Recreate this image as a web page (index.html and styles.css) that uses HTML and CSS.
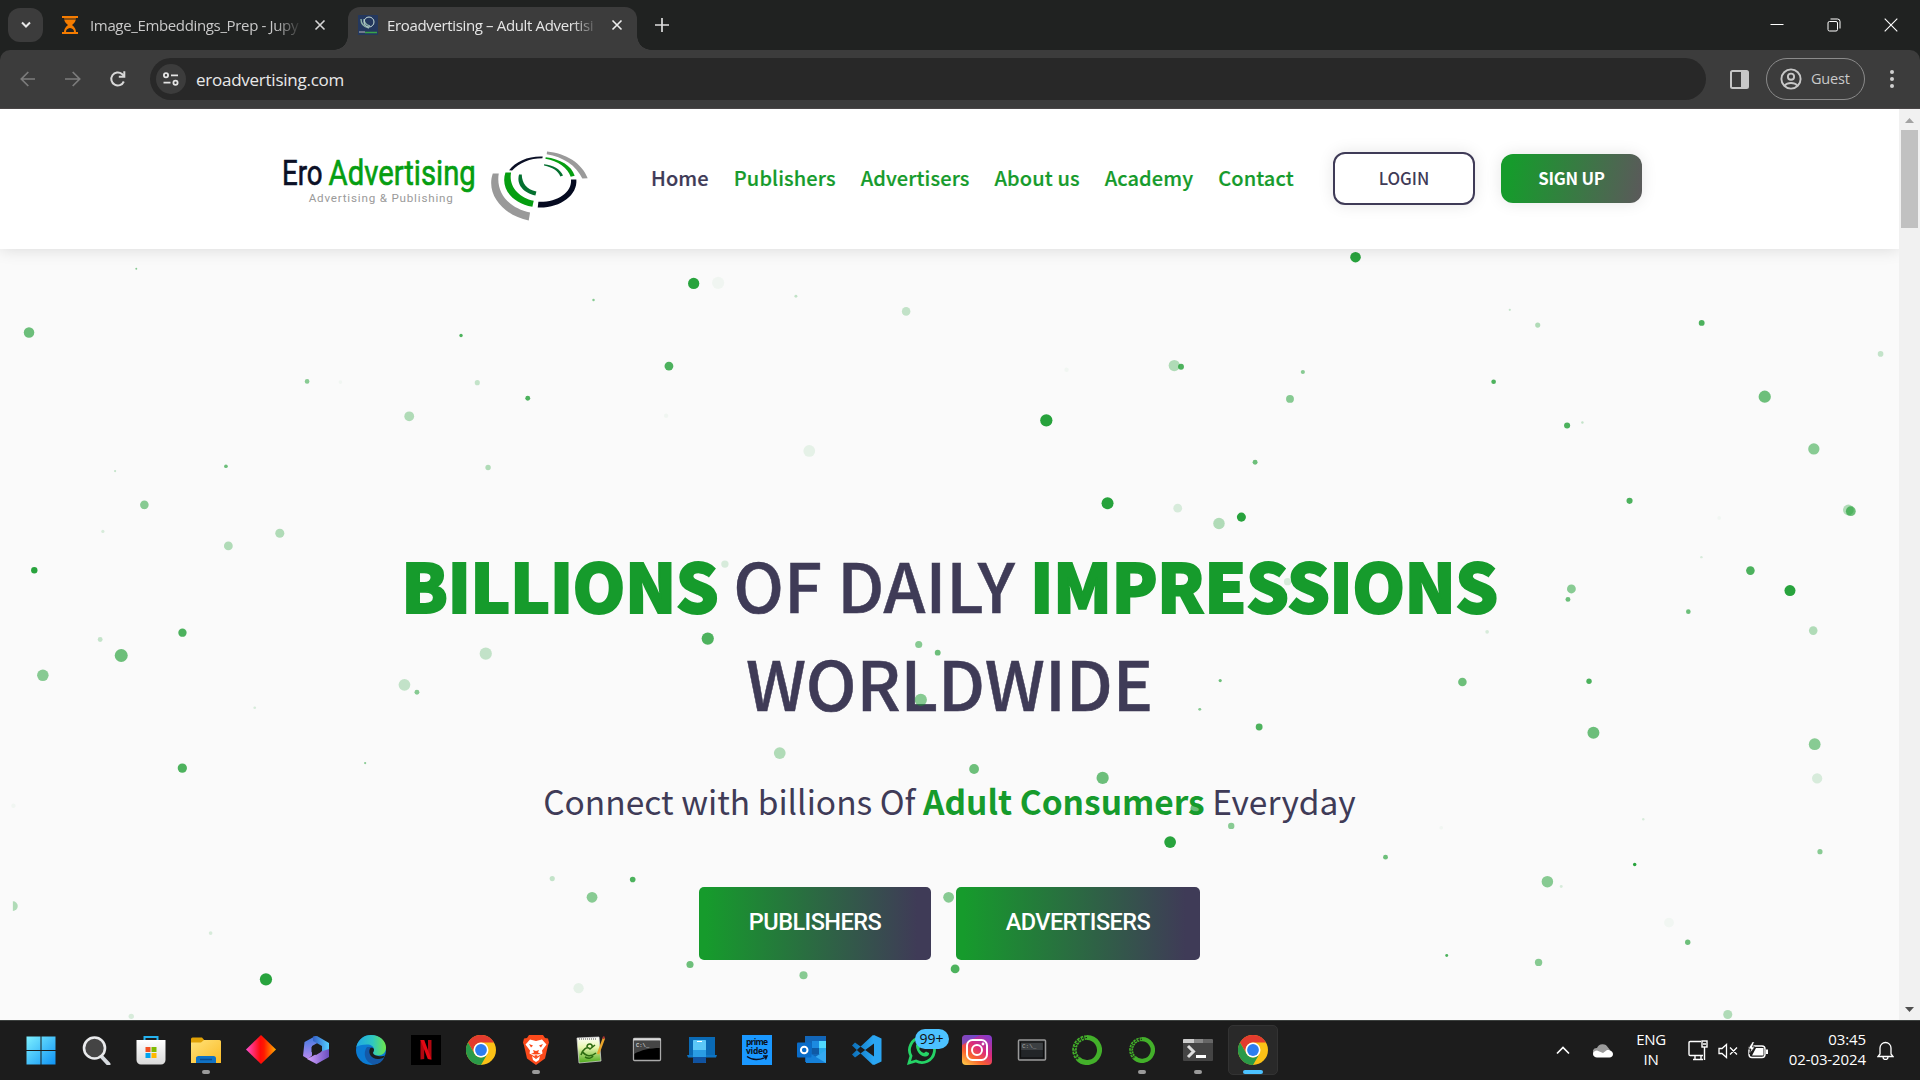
FILE: index.html
```html
<!DOCTYPE html>
<html lang="en">
<head>
<meta charset="utf-8">
<title>Eroadvertising – Adult Advertising</title>
<link rel="stylesheet" href="styles.css">
</head>
<body>
<svg class="defs" width="0" height="0">
  <defs>
    <linearGradient id="win" x1="0" y1="0" x2="1" y2="1"><stop offset="0" stop-color="#7df0ff"/><stop offset="1" stop-color="#0f93f5"/></linearGradient>
    <linearGradient id="store" x1="0" y1="0" x2="0" y2="1"><stop offset="0" stop-color="#fff"/><stop offset="1" stop-color="#d9d9d9"/></linearGradient>
    <linearGradient id="folder" x1="0" y1="0" x2="1" y2="1"><stop offset="0" stop-color="#ffe27a"/><stop offset="1" stop-color="#fbbb25"/></linearGradient>
    <linearGradient id="diamond"><stop offset="0" stop-color="#ff4fd0"/><stop offset=".48" stop-color="#ff0a0a"/><stop offset=".6" stop-color="#ff1a00"/><stop offset="1" stop-color="#ffb000"/></linearGradient>
    <linearGradient id="edgeTop"><stop offset="0" stop-color="#1fa7e6"/><stop offset=".55" stop-color="#2fc8c0"/><stop offset="1" stop-color="#6ee84a"/></linearGradient>
    <linearGradient id="insta" x1=".1" y1="1" x2=".8" y2="0"><stop offset="0" stop-color="#fec545"/><stop offset=".3" stop-color="#f9622f"/><stop offset=".6" stop-color="#dc2a7b"/><stop offset="1" stop-color="#8a3ac8"/></linearGradient>
    <linearGradient id="m1" x1="0" y1="0" x2="0" y2="1"><stop offset="0" stop-color="#3c7be0"/><stop offset="1" stop-color="#b98af0"/></linearGradient>
    <linearGradient id="m2"><stop offset="0" stop-color="#3560c8"/><stop offset="1" stop-color="#55d0ff"/></linearGradient>
    <linearGradient id="m3"><stop offset="0" stop-color="#d7a5ff"/><stop offset="1" stop-color="#6a4fc0"/></linearGradient>
    <linearGradient id="note" x1="0" y1="0" x2="0" y2="1"><stop offset="0" stop-color="#fff"/><stop offset=".4" stop-color="#e8f7b0"/><stop offset="1" stop-color="#4aa818"/></linearGradient>
    <linearGradient id="vs"><stop offset="0" stop-color="#0c6fb8"/><stop offset="1" stop-color="#2aa8f5"/></linearGradient>
    <symbol id="chrome" viewBox="0 0 30 30">
      <circle cx="15" cy="15" r="15" fill="#fbc116"/>
      <path d="M2 7.5A15 15 0 0 1 28 7.500H15a7.500 7.500 0 0 0-6.500 11.200z" fill="#e33b2e"/>
      <path d="M2 7.500 8.500 18.700A7.500 7.500 0 0 0 21.500 18.700L15 30A15 15 0 0 1 2 7.500z" fill="#2a9a48"/>
      <circle cx="15" cy="15" r="7.500" fill="#fff"/><circle cx="15" cy="15" r="5.900" fill="#2d7df0"/>
    </symbol>
    <symbol id="snake" viewBox="0 0 30 30">
      <path d="M15 2.500A12.500 12.500 0 1 1 6 23.700" fill="none" stroke="#43b02a" stroke-width="5"/>
      <path d="M15 2.500A12.500 12.500 0 0 0 6 23.700" fill="none" stroke="#43b02a" stroke-width="4.600" stroke-dasharray="2.600 .9"/>
      <path d="M15 2.500A12.500 12.500 0 0 0 6 23.700" fill="none" stroke="#1c1c1c" stroke-width="1.200" stroke-dasharray="1.500 2"/>
    </symbol>
  </defs>
</svg>

<div class="tabstrip">
  <span class="tab-search"><svg width="12" height="8" viewBox="0 0 12 8"><path d="M2 1.500 6 5.500 10 1.500" fill="none" stroke="#e8e8e8" stroke-width="2"/></svg></span>
  <div class="tab">
    <svg class="fav" width="18" height="20" viewBox="0 0 18 20"><path d="M1 1h16v2H1zM1 17h16v2H1z" fill="#f57c00"/><path d="M3 3h12c0 3-1.500 5-4 7 2.500 2 4 4 4 7H3c0-3 1.500-5 4-7C4.500 8 3 6 3 3z" fill="#f57c00"/><path d="M5 17c0-2.500 1.500-3.700 4-4 2.500.3 4 1.500 4 4z" fill="#202221"/><path d="M3 4h12" stroke="#202221"/></svg>
    <span class="tab-title">Image_Embeddings_Prep - Jupy</span>
    <svg class="x" width="12" height="12" viewBox="0 0 12 12"><path d="m1.500 1.500 9 9m0-9-9 9" stroke="#d6d6d6" stroke-width="1.600"/></svg>
  </div>
  <div class="tab active">
    <svg class="fav" width="20" height="20" viewBox="0 0 20 20"><path d="M0 0h20v20H0z" fill="#24385e"/><path d="M3 4c0 5 3 8 8 9M6 4c0 4 2 6 6 7" fill="none" stroke="#8fb3a8" stroke-width="1.400"/><circle cx="11" cy="7" r="5" fill="none" stroke="#c8ddd8"/><path d="M1 17h6" stroke="#bbb"/><path d="M7 17.500h12" stroke="#3aa548" stroke-width="1.500"/></svg>
    <span class="tab-title">Eroadvertising – Adult Advertisi</span>
    <svg class="x" width="12" height="12" viewBox="0 0 12 12"><path d="m1.500 1.500 9 9m0-9-9 9" stroke="#eee" stroke-width="1.600"/></svg>
  </div>
  <svg class="plus" width="14" height="14" viewBox="0 0 14 14"><path d="M7 0v14M0 7h14" stroke="#ddd" stroke-width="1.700"/></svg>
  <div class="win-controls">
    <svg width="14" height="14" viewBox="0 0 14 14"><path d="M.5 6.500h13" stroke="#fff"/></svg>
    <svg width="14" height="14" viewBox="0 0 14 14" fill="none" stroke="#fff"><rect x="1" y="3.500" width="9.500" height="9.500" rx="1.500"/><path d="M3.500 1h7a2.500 2.500 0 0 1 2.500 2.500v7"/></svg>
    <svg width="14" height="14" viewBox="0 0 14 14"><path d="m.7.700 12.600 12.600m0-12.600L.7 13.300" stroke="#fff" stroke-width="1.100"/></svg>
  </div>
</div>

<div class="toolbar">
  <div class="nav-icons">
    <svg width="18" height="18" viewBox="0 0 18 18" fill="none" stroke="#7c7c7c" stroke-width="1.700"><path d="M16 9H2.500M9.300 2 2.300 9l7 7"/></svg>
    <svg width="18" height="18" viewBox="0 0 18 18" fill="none" stroke="#7c7c7c" stroke-width="1.700"><path d="M1 9h14.500M8.700 2l7 7-7 7"/></svg>
    <svg width="18" height="18" viewBox="0 0 18 18" fill="none" stroke="#d8d8d8" stroke-width="2"><path d="M14.800 11.500A6.500 6.500 0 1 1 13 4L15 6"/><path d="M15.300 1.200v5.500h-5.500" /></svg>
  </div>
  <div class="omnibox">
    <span class="site-info"><svg width="18" height="14" viewBox="0 0 18 14" fill="none" stroke="#e4e4e4" stroke-width="1.800"><circle cx="4" cy="3.300" r="2.100"/><path d="M9 3.300h7M1.500 10.700h7"/><circle cx="13.500" cy="10.700" r="2.100"/></svg></span>
    <span class="url">eroadvertising.com</span>
  </div>
  <svg class="panel" width="19" height="19" viewBox="0 0 19 19"><rect x="1" y="1" width="17" height="17" rx="1.500" fill="none" stroke="#c7c7c7" stroke-width="2"/><path d="M11 1h7v17h-7z" fill="#c7c7c7"/></svg>
  <div class="guest">
    <svg width="22" height="22" viewBox="0 0 22 22" fill="none" stroke="#c7c7c7" stroke-width="1.900"><circle cx="11" cy="11" r="9.600"/><circle cx="11" cy="8.700" r="3.100"/><path d="M4.500 17.700c3-3.600 10-3.600 13 0"/></svg>
    <span>Guest</span>
  </div>
  <svg class="kebab" width="4" height="20" viewBox="0 0 4 20" fill="#d0d0d0"><circle cx="2" cy="3" r="2"/><circle cx="2" cy="10" r="2"/><circle cx="2" cy="17" r="2"/></svg>
</div>

<div class="viewport">
  <div class="page">
    <header class="site-header">
      <svg class="logo" width="313" height="77" viewBox="60 50 940 230">
        <g class="logo-name"><text x="66" y="165" textLength="122" lengthAdjust="spacingAndGlyphs" fill="#0b1026" stroke="#0b1026">Ero</text><text x="206" y="165" textLength="442" lengthAdjust="spacingAndGlyphs" fill="#069e11" stroke="#069e11">Advertising</text></g>
        <text class="logo-tag" x="146" y="216" textLength="433" lengthAdjust="spacing" fill="#9a9a9a">Advertising &amp; Publishing</text>
        <path d="M748 119C768 92 808 76 849 78l-1 5C810 83 780 96 757 120z" fill="#0b1026"/>
        <path d="M862 63c56 5 105 35 122 80l-16 1C950 105 910 79 861 71z" fill="#9a9a9a"/>
        <path d="M858 80c43 5 78 25 87 56l-12 3C924 112 895 92 857 85z" fill="#069e11"/>
        <path d="M853 101c27 3 49 14 57 34l-8 3c-6-16-24-28-49-33z" fill="#047030"/>
        <path d="M934 147h16c4 48-50 87-116 84l2-17c55 2 101-26 98-67z" fill="#050a20"/>
        <path d="M737 126h17c-8 40 22 76 68 85l-4 18c-60-11-97-54-81-103z" fill="#069e11"/>
        <path d="M778 132h8c1 26 14 45 44 51l-3 12c-35-7-58-33-49-63z" fill="#047030"/>
        <path d="M699 129h18c-10 59 33 105 94 117l-4 24c-74-14-130-77-108-141z" fill="#999"/>
      </svg>
      <nav class="menu">
        <a class="current">Home</a><a>Publishers</a><a>Advertisers</a><a>About us</a><a>Academy</a><a>Contact</a>
      </nav>
      <a class="btn login">LOGIN</a>
      <a class="btn signup">SIGN UP</a>
    </header>
    <main class="hero">
      <h1><b>BILLIONS</b> OF DAILY <b>IMPRESSIONS</b><br><span class="line2">WORLDWIDE</span></h1>
      <p class="lead">Connect with billions Of <b>Adult Consumers</b> Everyday</p>
      <div class="cta"><a class="pub">PUBLISHERS</a><a class="adv">ADVERTISERS</a></div>
      <svg class="particles" viewBox="0 203.350 1550.850 629.650" preserveAspectRatio="none" fill="#169b2c">
        <g opacity=".92"><circle cx="1107" cy="210" r="4.300"/><circle cx="566.500" cy="231.500" r="4.600"/><circle cx="854.500" cy="343.300" r="5"/><circle cx="904.500" cy="411" r="4.900"/><circle cx="1013.800" cy="422.300" r="3.700"/><circle cx="1461.800" cy="482.300" r="4.500"/><circle cx="955.600" cy="687.700" r="4.800"/><circle cx="217.200" cy="799.800" r="5"/><circle cx="28" cy="465.700" r="2.600"/><circle cx="1335" cy="706" r="1.400"/></g>
        <g opacity=".76"><circle cx="546.300" cy="299" r="3.600"/><circle cx="578" cy="521.500" r="5"/><circle cx="964.500" cy="299.500" r="2.400"/><circle cx="431" cy="325.200" r="2"/><circle cx="376.500" cy="274" r="1.400"/><circle cx="1389.700" cy="263.700" r="2.400"/><circle cx="1219.800" cy="311.800" r="1.900"/><circle cx="1279.800" cy="347.500" r="2.500"/><circle cx="1330.800" cy="409" r="2.500"/><circle cx="1429.500" cy="466" r="3.500"/><circle cx="1028.300" cy="593.700" r="2.800"/><circle cx="1297.700" cy="556.400" r="2.200"/><circle cx="148.900" cy="627.300" r="3.800"/><circle cx="149" cy="516.700" r="3.400"/><circle cx="780" cy="791.300" r="3.600"/><circle cx="516.700" cy="718.300" r="2.300"/><circle cx="1181.500" cy="780.300" r="1.200"/></g>
        <g opacity=".62"><circle cx="23.700" cy="271.500" r="4.300"/><circle cx="99" cy="535.300" r="5.300"/><circle cx="1441.200" cy="324" r="5"/><circle cx="1301.300" cy="598.500" r="4.900"/><circle cx="795.500" cy="628" r="4"/><circle cx="900.500" cy="635.300" r="5"/><circle cx="977" cy="660.500" r="4.800"/><circle cx="765.800" cy="533" r="2.400"/><circle cx="1194.300" cy="557" r="3.500"/><circle cx="184.500" cy="380.800" r="1.500"/><circle cx="1025" cy="377.500" r="2"/><circle cx="1378.800" cy="499.500" r="1.900"/><circle cx="563.500" cy="787.700" r="2.900"/><circle cx="996.500" cy="555.800" r="1.300"/><circle cx="1131.500" cy="700" r="2"/><circle cx="1378.300" cy="769.500" r="2.200"/><circle cx="1280.500" cy="489.500" r="2"/><circle cx="1511.500" cy="417.500" r="4"/></g>
        <g opacity=".5"><circle cx="752" cy="571.500" r="5"/><circle cx="656.200" cy="796.500" r="3.300"/><circle cx="483.500" cy="732.800" r="4.400"/><circle cx="774.700" cy="732.800" r="4.400"/><circle cx="750.300" cy="526.300" r="2.900"/><circle cx="35" cy="551.500" r="4.700"/><circle cx="117.900" cy="412.300" r="3.500"/><circle cx="1481.300" cy="366.600" r="4.600"/><circle cx="1482" cy="607.800" r="4.800"/><circle cx="1263.700" cy="720" r="4.700"/><circle cx="1256.500" cy="786" r="3"/><circle cx="1283.300" cy="481" r="3.600"/><circle cx="1005.500" cy="674.500" r="2.600"/><circle cx="1486.300" cy="695.500" r="2.100"/><circle cx="250.800" cy="311.500" r="1.900"/><circle cx="1064" cy="303.800" r="1.700"/><circle cx="340.500" cy="565.300" r="2"/><circle cx="1053.500" cy="325.800" r="3.200"/><circle cx="979.800" cy="579.300" r="1.200"/><circle cx="484.700" cy="245" r="1"/><circle cx="111.300" cy="219.500" r=".8"/><circle cx="298.200" cy="623.200" r=".9"/></g>
        <g opacity=".32"><circle cx="334.200" cy="340" r="4"/><circle cx="228.500" cy="435.500" r="3.700"/><circle cx="186.500" cy="445.800" r="3.600"/><circle cx="995.500" cy="427.500" r="4.700"/><circle cx="959" cy="298.500" r="4.600"/><circle cx="636.800" cy="615" r="4.800"/><circle cx="1509.500" cy="416.500" r="4.400"/><circle cx="1480.800" cy="515" r="3.500"/><circle cx="1411" cy="828.500" r="3.700"/><circle cx="1255.800" cy="265.500" r="2.100"/><circle cx="398.600" cy="381.800" r="2.200"/><path d="M10.500 736a4 4 0 0 1 0 8z"/></g>
        <g opacity=".24"><circle cx="740" cy="254.300" r="3.500"/><circle cx="396.700" cy="533.800" r="5"/><circle cx="330.300" cy="559.300" r="4.800"/><circle cx="389.800" cy="312.500" r="2.100"/><circle cx="451" cy="717.500" r="2.100"/><circle cx="81.800" cy="522.300" r="2"/><circle cx="1535.800" cy="289" r="2.300"/><circle cx="1292.300" cy="345" r="1"/><circle cx="1233" cy="253" r=".9"/><circle cx="94" cy="384.700" r=".9"/><circle cx="650" cy="242" r="1.200"/></g>
        <g opacity=".15"><circle cx="107.200" cy="830" r="2.200"/><circle cx="592" cy="460.700" r="3"/><circle cx="1484" cy="635.700" r="4.200"/><circle cx="961.800" cy="415" r="3.600"/><circle cx="1051.500" cy="475" r="3"/><circle cx="1214.500" cy="516" r="1.500"/><circle cx="172" cy="762" r="1.500"/><circle cx="84" cy="434" r="1.300"/><circle cx="208" cy="578" r="1.100"/><circle cx="1275" cy="724" r="1.200"/><circle cx="1389.500" cy="455" r="1"/><circle cx="1342" cy="669" r="1"/></g>
        <g opacity=".09"><circle cx="472.500" cy="807" r="4.200"/><circle cx="660.900" cy="368.300" r="4.800"/></g>
        <g opacity=".04"><circle cx="586.500" cy="231" r="5"/><circle cx="1363" cy="753.500" r="4"/><circle cx="1404" cy="423" r="1.500"/><circle cx="278" cy="312" r="1.500"/><circle cx="544" cy="339.500" r="1.800"/><circle cx="871" cy="302" r="1.800"/><circle cx="11" cy="658" r="1.800"/><circle cx="1177" cy="676" r="1.500"/></g>
      </svg>
    </main>
  </div>
  <div class="scrollbar">
    <svg width="21" height="21" viewBox="0 0 21 21"><path d="m6 14 4.500-5 4.500 5z" fill="#a3a3a3"/></svg>
    <div class="thumb"></div>
    <svg width="21" height="21" viewBox="0 0 21 21"><path d="m6 8 4.500 5L15 8z" fill="#505050"/></svg>
  </div>
</div>

<div class="taskbar">
  <div class="apps">
    <span class="app"><svg viewBox="0 0 30 30"><path d="M.5 1.500h14v13.500H.5zM15.500 1.500h14v13.500h-14zM.5 16h14v13.500H.5zM15.500 16h14v13.500h-14z" fill="url(#win)"/></svg></span>
    <span class="app"><svg viewBox="0 0 30 30"><path d="m20 21 7.500 8" stroke="#d5d9de" stroke-width="4" stroke-linecap="round"/><circle cx="13.500" cy="13" r="10.500" fill="#444" stroke="#e9eaec" stroke-width="2.600"/></svg></span>
    <span class="app"><svg viewBox="0 0 30 30"><path d="M8.500 6V2h13v4" fill="none" stroke="#25b3f0" stroke-width="2"/><path d="M.5 5h29v20a4.500 4.500 0 0 1-4.500 4.500H5A4.500 4.500 0 0 1 .5 25z" fill="url(#store)"/><path d="M9.500 12h5v5h-5z" fill="#f25022"/><path d="M15.500 12h5v5h-5z" fill="#7fba00"/><path d="M9.500 18h5v5h-5z" fill="#00a4ef"/><path d="M15.500 18h5v5h-5z" fill="#ffb900"/></svg></span>
    <span class="app run"><svg viewBox="0 0 30 30"><path d="M0 4a1.500 1.500 0 0 1 1.500-1.500H11L14 6v4H0z" fill="#e0a106"/><path d="M0 7.500h10L13 5h15.500A1.500 1.500 0 0 1 30 6.500V28H0z" fill="url(#folder)"/><path d="M5 28v-5.500A2.500 2.500 0 0 1 7.500 21h15a2.500 2.500 0 0 1 2.500 2.500V28z" fill="#1072c4"/><path d="M9 24.500h12" stroke="#0a4c90" stroke-width="1.500"/></svg></span>
    <span class="app"><svg viewBox="0 0 30 30"><path d="M15 0 30 14.500 15 29 0 14.500z" fill="url(#diamond)"/></svg></span>
    <span class="app"><svg viewBox="0 0 30 30"><path d="M14.500 1 3.500 7 2 21l5 3 4-3.500V11l8-4.500z" fill="url(#m1)"/><path d="m12 1.500 4-.5 12 7v13l-7-3v-7l-9-5z" fill="url(#m2)"/><path d="M28 14v8L15.500 29 6 24l1-.5L20 16.500z" fill="url(#m3)"/><path d="m15 9.500 5 2.500v5l-5 3-4.500-3v-5z" fill="#1c1c1c"/></svg></span>
    <span class="app"><svg viewBox="0 0 30 30"><circle cx="15" cy="15" r="15" fill="#0b7bd3"/><path d="M.3 12C2 4.500 8 0 15 0c9 0 15 6 15 12.500 0 5-3.500 8-8 8-3 0-5-1-5-2.500 0-1 1-1.500 1-3.500 0-3-3-5-7-5-5 0-9 1-10.700 2.500z" fill="url(#edgeTop)"/><path d="M11 12c-5 7-1 17 8 17.500 4-.5 7-3 9-6.500-5 2.500-11 0-12-6-1 0-3-2-1-5z" fill="#1459a8"/><path d="M14 13.500c-2.500 5 2 10.500 7.500 10.500 2 0 4-.3 6-1.300l1.500-2.200c-3 1.500-11 1-12-2.500 0-1 1-1.500 1-3.500-.5-2-2.500-3-4-1z" fill="#1c1c1c"/></svg></span>
    <span class="app"><svg viewBox="0 0 30 30"><path d="M0 0h30v30H0z"/><path d="M9.500 5h3.700v19l-3.700.5zM17 5h3.500v19.500L17 24z" fill="#b00710"/><path d="M9.500 5h3.700l7.300 19.500-3.700-.500z" fill="#e50914"/></svg></span>
    <span class="app"><svg><use href="#chrome"/></svg></span>
    <span class="app run"><svg viewBox="0 0 30 30"><path d="m8 0h14l2 3 3 .500 1 4-1 3-3 13-9 6.500L6 23.500 3 10.500l-1-3 1-4L6 3z" fill="#fb4a1b"/><path d="m15 6 6-1.500 4.500 5-4.500 6 .500 3L17 21l-2 1.500L13 21l-4.500-2.500.5-3-4.500-6L9 4.500z" fill="#fff"/><path d="m8 9 4 1.500-2 2zM22 9l-4 1.500 2 2zM12 15l3 1 3-1-1 2.500 3 1.500-5 .5-5-.5 3-1.500zM13 21l2-1 2 1-2 2z" fill="#fb4a1b"/><path d="m11 21 4 3 4-3-1 4-3 2-3-2z" fill="#fff"/></svg></span>
    <span class="app"><svg viewBox="0 0 30 30"><path d="m1 3 22-1 2 24-22 2z" fill="url(#note)" stroke="#ddd" stroke-width=".7"/><path d="M3 4h18" stroke="#888" stroke-width="1.500" stroke-dasharray="1 1"/><path d="M5 20c2-6 6-9 9-6l5-4M6 16c4 6 9 6 14 2M11 12c0-4 6-4 5 0M9 22c4 2 7 1 8-1" fill="none" stroke="#2d6b12" stroke-width="1.600"/><path d="m28 3-6 16" stroke="#e9a52b" stroke-width="2.400"/><path d="m28 1.500-.7 2.500" stroke="#a33" stroke-width="2"/></svg></span>
    <span class="app"><svg viewBox="0 0 30 30"><rect x="1.500" y="3.500" width="27" height="22" rx="1" fill="#000" stroke="#aaa" stroke-width="1.300"/><path d="M1.500 4.500h27" stroke="#ddd" stroke-width="2.200"/><path d="M2 6h26v7C18 13 9 15 2 19z" fill="#454545"/><text x="4" y="12" font-size="5.500" class="mono" fill="#eee">C:\_</text></svg></span>
    <span class="app"><svg viewBox="0 0 30 30"><path d="M2 2h26v18H2z" fill="#0a6ab5"/><path d="M0 20h30l-1 2.500H1z" fill="#0d74c4"/><rect x="6" y="5" width="13" height="23" rx="1" fill="#2a9de4"/><path d="M6 6a1 1 0 0 1 1-1h11a1 1 0 0 1 1 1v9H6z" fill="#5cc8f8"/><path d="M6 22h13v5a1 1 0 0 1-1 1H7a1 1 0 0 1-1-1z" fill="#1052a0"/><path d="M10 6.500h5" stroke="#fff"/></svg></span>
    <span class="app"><svg viewBox="0 0 30 30"><path d="M0 0h30v30H0z" fill="#1a98ff"/><text class="prime" x="15" y="10" textLength="22" fill="#0b1020">prime</text><text class="prime" x="15" y="19" textLength="22" fill="#0b1020">video</text><path d="M5 21.500c5 4 13 4 19 .5M21 21l4 0-1.500 3.500" fill="none" stroke="#0b1020" stroke-width="1.400"/></svg></span>
    <span class="app"><svg viewBox="0 0 30 30"><path d="M8 1h21v26H8z" fill="#1266b8"/><path d="M15 6h7v7h-7z" fill="#1c8ae0"/><path d="M22 6h7v7h-7z" fill="#50d9ff"/><path d="M15 13h7v6h-7z" fill="#0f5aa5"/><path d="M22 13h7v6h-7z" fill="#28a8ea"/><path d="m9 28 20-13v13z" fill="#35a9f0"/><path d="m9 16 20 12H9z" fill="#1580d8"/><rect y="7.500" width="14.500" height="15" rx="1" fill="#0a6cc8"/><circle cx="7.200" cy="15" r="3.300" fill="none" stroke="#fff" stroke-width="2"/></svg></span>
    <span class="app"><svg viewBox="0 0 30 30"><path d="m22 0 7.500 3.500v23L22 30z" fill="#2aa5f2"/><path d="M22 8.500 3 22.500 0 19.500 21 0l1 .5zM22 21.500 3 7.500l-3 3L21 30l1-.5z" fill="url(#vs)"/></svg></span>
    <span class="app"><svg viewBox="0 0 30 30"><path d="m2 28 2-7A12.500 12.500 0 1 1 9 26z" fill="none" stroke="#25d366" stroke-width="2.800"/><path d="M9 10c1-2 3-2 3.500-.5l1 2.500-1.300 2c1.300 2.300 3 3.500 4.800 4l2-1.500 3 1.500c.5 2-2 4-4.500 3.500C12 20.500 9 15 9 10z" fill="#25d366"/></svg><em class="badge">99+</em></span>
    <span class="app"><svg viewBox="0 0 30 30"><rect width="30" height="30" rx="4" fill="url(#insta)"/><path d="M0 4a4 4 0 0 1 4-4h14L0 10z" fill="#5b52d8" opacity=".7"/><g fill="none" stroke="#fff" stroke-width="2"><rect x="5" y="5" width="20" height="20" rx="5.500"/><circle cx="15" cy="15" r="5"/></g><circle cx="21" cy="9" r="1.400" fill="#fff"/></svg></span>
    <span class="app"><svg viewBox="0 0 30 30"><rect x="1.500" y="5" width="27" height="20" rx="1" fill="#222528" stroke="#999" stroke-width="1.500"/><path d="M3 6h24v9H3z" fill="#3c4043"/><rect x="3.500" y="7" width="23" height="16" fill="none" stroke="#0e0e0e" stroke-width="1.200"/><text x="5" y="13" font-size="6" class="mono" fill="#aaa">C:\_</text></svg></span>
    <span class="app"><svg><use href="#snake"/></svg></span>
    <span class="app run"><svg class="small"><use href="#snake"/></svg></span>
    <span class="app run"><svg viewBox="0 0 30 30"><rect y="4" width="30" height="22" rx="1" fill="#444"/><path d="M0 5a1 1 0 0 1 1-1h10v4H0z" fill="#ccc"/><path d="M11 4h9v4h-9z" fill="#888"/><path d="M20 4h9l1 1v3H20z" fill="#666"/><path d="m5 11 5.500 5.500L5 22" fill="none" stroke="#ddd" stroke-width="3"/><path d="M13 21.500h10" stroke="#fff" stroke-width="3"/></svg></span>
    <span class="app on"><svg><use href="#chrome"/></svg></span>
  </div>
  <div class="tray">
    <svg class="chev" width="14" height="9" viewBox="0 0 14 9"><path d="m1 7.500 6-6 6 6" fill="none" stroke="#fff" stroke-width="1.700"/></svg>
    <svg class="cloud" width="20" height="14" viewBox="0 0 20 14"><path d="M1 11a4 4 0 0 1 3-7 6 6 0 0 1 11-.5L17 6 4 13z" fill="#9b9b9b"/><path d="M0 10c0-2 2-3.500 4-3.500L10 9l4-3c3-.5 6 1.500 6 4 0 2-1.500 3.500-3.500 3.500H4C2 13.500 0 12 0 10z" fill="#fff"/></svg>
    <span class="lang">ENG<br>IN</span>
    <svg class="net" width="20" height="21" viewBox="0 0 20 21" fill="none" stroke="#fff" stroke-width="1.400"><path d="M13 1.500H2.200A1.200 1.200 0 0 0 1 2.700v11.600a1.200 1.200 0 0 0 1.200 1.200H15M5 19.500h10M7 16v3M13 16v3"/><rect x="14" y="1" width="5" height="6"/><path d="M15 4h3M16.500 7v13"/></svg>
    <svg class="vol" width="20" height="16" viewBox="0 0 20 16" fill="none" stroke="#fff" stroke-width="1.300"><path d="M1 5.500h3l4.500-4v13l-4.500-4H1zM12 4.500l7 7m0-7-7 7"/></svg>
    <svg class="bat" width="20" height="17" viewBox="0 0 20 17"><rect x="1" y="4" width="16" height="11.500" rx="3" fill="none" stroke="#fff" stroke-width="1.400"/><path d="M4 13.500 8 6h7.500v7.500zM18 7.500h2V12h-2z" fill="#fff"/><path d="M4.500-.5 0 7h3L1.500 12 7 5H4.500L6.500-.5z" fill="#fff" stroke="#1c1c1c" stroke-width=".8"/></svg>
    <span class="clock">03:45<br>02-03-2024</span>
    <svg class="bell" width="17" height="19" viewBox="0 0 17 19" fill="none" stroke="#fff" stroke-width="1.300"><path d="M3 13V7a5.500 5.500 0 0 1 11 0v6l2 2.500H1zM6 16a2.500 2.500 0 0 0 5 0"/></svg>
  </div>
</div>
</body>
</html>
```
FILE: styles.css
```css
* { box-sizing: border-box; }
body { margin: 0; width: 1920px; height: 1080px; overflow: hidden; display: flex; flex-direction: column; font-family: "Open Sans", "Noto Sans", sans-serif; background: #202221; }
svg { display: block; flex: none; }
.defs { position: absolute; }

.tabstrip { height: 50px; display: flex; align-items: flex-start; padding-left: 8px; background: #202221; }
.tab-search { flex: none; width: 35px; height: 34px; margin-top: 8px; border-radius: 12px; background: #3c3c3c; display: flex; align-items: center; justify-content: center; }
.tab { flex: none; width: 289px; height: 43px; margin-top: 7px; display: flex; align-items: center; padding: 0 14px 8px 10px; }
.tab:not(.active) { margin-left: 8px; width: 297px; padding-right: 22px; }
.tab-title { width: 210px; margin-left: 9px; overflow: hidden; white-space: nowrap; font-size: 15px; letter-spacing: -0.350px; line-height: 24px; color: #c9c9c9; -webkit-mask-image: linear-gradient(90deg, #000 88%, transparent 101%); mask-image: linear-gradient(90deg, #000 88%, transparent 101%); }
.tab:not(.active) .tab-title { margin-left: 11px; }
.tab .x { margin-left: auto; }
.active { position: relative; background: #3c3c3c; border-radius: 12px 12px 0 0; }
.active .tab-title { color: #e6e6e6; }
.active::before, .active::after { content: ""; position: absolute; bottom: 0; width: 14px; height: 14px; }
.active::before { left: -14px; background: radial-gradient(circle at 0 0, transparent 13.5px, #3c3c3c 14px); }
.active::after { right: -14px; background: radial-gradient(circle at 100% 0, transparent 13.5px, #3c3c3c 14px); }
.plus { margin: 18px 0 0 18px; }
.win-controls { margin: 18px 22px 0 auto; display: flex; gap: 43px; }

.toolbar { height: 59px; display: flex; align-items: center; padding-left: 19px; background: #3c3c3c; border-radius: 10px 10px 0 0; border-bottom: 1px solid #4a4647; }
.nav-icons { display: flex; gap: 27px; width: 131px; }
.omnibox { width: 1556px; height: 42px; border-radius: 21px; background: #282828; display: flex; align-items: center; padding-left: 6px; }
.site-info { width: 30px; height: 30px; border-radius: 50%; background: #3c3c3c; display: flex; align-items: center; justify-content: center; }
.url { margin-left: 10px; font-size: 17px; letter-spacing: -0.250px; color: #e8e8e8; }
.panel { margin-left: 24px; }
.guest { width: 99px; height: 42px; margin-left: 17px; border: 1px solid #8b8b8b; border-radius: 21px; display: flex; align-items: center; gap: 9px; padding-left: 13px; color: #c9c9c9; font-size: 14.500px; letter-spacing: -0.2px; }
.guest span { margin-top: -2px; }
.kebab { margin-left: 25px; }

.viewport { height: 911px; display: flex; }
.page { width: 1899px; display: flex; flex-direction: column; background: #fafafa; }
.site-header { height: 140px; flex: none; display: flex; align-items: center; padding: 0 0 2px 280px; background: #fff; box-shadow: 0 0 16px rgba(0,0,0,.14); z-index: 1; clip-path: inset(0 0 -20px 0); }
.logo { margin-top: 14px; }
.logo-name { font-family: "Roboto", sans-serif; font-size: 106px; stroke-width: 2px; }
.logo-tag { font-family: "Roboto", sans-serif; font-size: 35px; }
.menu, .btn, h1, .lead { font-family: "Noto Sans CJK JP", sans-serif; }
.menu { display: flex; gap: 25px; margin-left: 58px; width: 682px; font-size: 20px; letter-spacing: .12px; font-weight: 500; line-height: 30px; color: #169b2c; white-space: nowrap; -webkit-text-stroke: .2px; }
.current { color: #3f3b57; }
.btn { display: flex; align-items: center; justify-content: center; border-radius: 12px; font-size: 16.800px; font-weight: 500; line-height: 24px; box-shadow: 0 0 16px rgba(0,0,0,.1); }
.login { width: 142px; height: 53px; border: 2px solid #3f3b57; color: #3f3b57; background: #fff; }
.signup { width: 141px; height: 49px; margin-left: 26px; color: #fff; font-weight: 700; letter-spacing: -.25px; background: linear-gradient(100deg, #169b2c 8%, #5a5a5a 98%); }

.hero { position: relative; flex: 1; display: flex; flex-direction: column; align-items: center; color: #3f3b57; }
.hero b { color: #169b2c; }
h1 { margin: 286px 0 0; font-size: 67.300px; line-height: 98px; font-weight: 500; text-align: center; white-space: nowrap; -webkit-text-stroke: .5px; }
h1 b { font-weight: 900; letter-spacing: -.6px; -webkit-text-stroke: 1.800px; }
.lead { margin: 45px 0 0; font-size: 33.500px; line-height: 50px; font-weight: 400; white-space: nowrap; }
.lead b { font-weight: 700; }
.cta { display: flex; gap: 25px; margin-top: 61px; }
.cta a { height: 73px; border-radius: 5px; display: flex; align-items: center; justify-content: center; padding-bottom: 4px; color: #fff; font: 500 23.500px "Roboto", sans-serif; letter-spacing: -.55px; background: linear-gradient(90deg, #169b2c 3%, #3f3b57 94%); }
.pub { width: 232px; }
.adv { width: 244px; }
.particles { position: absolute; inset: 0; width: 1899px; height: 771px; }

.scrollbar { width: 21px; background: #f1f1f1; display: flex; flex-direction: column; align-items: center; }
.thumb { width: 17px; height: 98px; margin-bottom: auto; background: #c1c1c1; }

.taskbar { height: 60px; display: flex; background: #1c1c1c; border-top: 1px solid #3c403e; padding-left: 13px; color: #fff; }
.apps { display: flex; padding-top: 4px; }
.app { position: relative; width: 55.100px; height: 50px; display: flex; align-items: center; justify-content: center; }
.app svg { width: 30px; height: 30px; }
.app svg.small { width: 26px; height: 26px; }
.run::after { content: ""; position: absolute; bottom: 1px; width: 8px; height: 4px; border-radius: 2px; background: #9a9a9a; }
.on { width: 50px; margin-left: 2.500px; background: #292929; border: 1px solid #333; border-radius: 5px; }
.on::after { content: ""; position: absolute; bottom: 0; width: 20px; height: 4px; border-radius: 2px; background: #4cc2ff; }
.badge { position: absolute; left: 20px; top: 4px; width: 34px; height: 20px; border-radius: 10px; background: #4cc2ff; color: #111; font: 14px/20px "Open Sans", sans-serif; text-align: center; }
.mono { font-family: "Liberation Mono", monospace; }
.prime { font: 700 8.500px "Open Sans", sans-serif; text-anchor: middle; }
.tray { margin-left: auto; display: flex; align-items: center; padding-right: 26px; font-size: 15px; line-height: 20px; }
.cloud { margin-left: 23px; }
.lang { width: 40px; margin: -3px 0 0 18px; text-align: center; letter-spacing: -.3px; }
.net { margin-left: 17px; }
.vol { margin-left: 10px; }
.bat { margin-left: 10px; }
.clock { width: 88px; margin: -3px 0 0 10px; text-align: right; white-space: nowrap; letter-spacing: -.1px; }
.bell { margin-left: 11px; }
```
